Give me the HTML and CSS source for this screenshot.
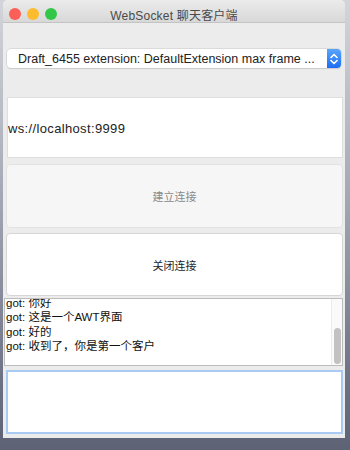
FILE: index.html
```html
<!DOCTYPE html>
<html lang="zh">
<head>
  <meta charset="UTF-8" />
  <meta name="viewport" content="width=device-width, initial-scale=1.0"/>
  <title>WebSocket 聊天客户端</title>
  <link rel="stylesheet" href="styles.css">
</head>
<body>

  <div class="window">
    <!-- barre de titre -->
    <div class="titlebar">
      <div class="lights">
        <span class="light red"></span>
        <span class="light yellow"></span>
        <span class="light green"></span>
      </div>
      <div class="title">WebSocket 聊天客户端</div>
    </div>

    <div class="content">
      <div class="combo">
        <span class="combo-text">Draft_6455 extension: DefaultExtension max frame ...</span>
        <span class="stepper">
          <svg width="8" height="12" viewBox="0 0 8 12">
            <path d="M1 4.5 L4 1.5 L7 4.5 M1 7.5 L4 10.5 L7 7.5" fill="none" stroke="#fff" stroke-width="1.6" stroke-linecap="round" stroke-linejoin="round"/>
          </svg>
        </span>
      </div>

      <div class="url-field">ws://localhost:9999</div>

      <div class="btn btn-disabled">建立连接</div>
      <div class="btn">关闭连接</div>

      <div class="log">
        <div class="log-lines">
          <div>got: 你好</div>
          <div>got: 这是一个AWT界面</div>
          <div>got: 好的</div>
          <div>got: 收到了，你是第一个客户</div>
        </div>
        <div class="scrollbar"><div class="thumb"></div></div>
      </div>

      <div class="input-box"></div>
    </div>
  </div>

</body>
</html>
```

FILE: styles.css
```css
body {
  margin: 0;
  height: 450px;
  overflow: hidden;
  background: linear-gradient(180deg, #d4d5da 0%, #a9acb8 40%, #6c7184 85%, #5d6275 100%);
  font-family: "Liberation Sans", "Noto Sans CJK SC", sans-serif;
}

.window {
  margin-left: 3px;
  width: 342px;
  height: 438px;
  background: #ececec;
  border-radius: 5px 5px 0 0;
  overflow: hidden;
  display: flex;
  flex-direction: column;
}

/* title bar */
.titlebar {
  height: 22px;
  border-bottom: 1px solid #c4c4c4;
  background: linear-gradient(180deg, #ebebeb, #d8d8d8);
  display: flex;
  align-items: center;
  position: relative;
}

.lights {
  display: flex;
  gap: 6px;
  padding-left: 6px;
  padding-top: 5px;
}

.light {
  width: 12px;
  height: 12px;
  border-radius: 50%;
}

.red { background: #fc5f57; }
.yellow { background: #fdbc2e; }
.green { background: #33c748; }

.title {
  position: absolute;
  left: 0;
  right: 0;
  top: 6px;
  text-align: center;
  font-size: 12px;
  letter-spacing: 0.2px;
  color: #4a4a4a;
}

.content {
  display: flex;
  flex-direction: column;
}

/* combo box */
.combo {
  margin: 26px 0 0 4px;
  width: 334px;
  height: 19px;
  box-sizing: border-box;
  background: #fff;
  border-radius: 4px;
  box-shadow: 0 0 0 0.5px #c8c8c8, 0 1px 1px rgba(0, 0, 0, 0.12);
  display: flex;
  align-items: center;
  justify-content: space-between;
}

.combo-text {
  padding-left: 11px;
  font-size: 12.5px;
  color: #222;
  white-space: nowrap;
}

.stepper {
  width: 14px;
  height: 19px;
  border-radius: 0 4px 4px 0;
  background: linear-gradient(180deg, #5aa5fb, #1b6ef3);
  display: flex;
  align-items: center;
  justify-content: center;
}

/* text field */
.url-field {
  margin: 29px 0 0 4px;
  width: 336px;
  height: 61px;
  box-sizing: border-box;
  background: #fff;
  border: 1px solid #dedede;
  font-size: 13px;
  letter-spacing: 0.35px;
  color: #222;
  display: flex;
  align-items: center;
  padding-top: 1px;
}

/* buttons */
.btn {
  margin: 5px 0 0 3px;
  width: 337px;
  height: 63px;
  box-sizing: border-box;
  background: #fff;
  border: 1px solid #d6d6d6;
  border-radius: 4px;
  display: flex;
  align-items: center;
  justify-content: center;
  font-size: 11px;
  color: #1e1e1e;
}

.btn-disabled {
  margin-top: 6px;
  height: 64px;
  background: #f6f6f6;
  border-color: #e2e2e2;
  color: #8a8a8a;
}

/* log area */
.log {
  margin: 2px 0 0 1px;
  width: 339px;
  height: 68px;
  box-sizing: border-box;
  background: #fff;
  border: 1px solid #bcbcbc;
  display: flex;
  overflow: hidden;
}

.log-lines {
  flex: 1;
  margin-top: -3px;
  padding-left: 1px;
  font-size: 11.5px;
  line-height: 14.3px;
  color: #111;
}

.scrollbar {
  width: 10px;
  border-left: 1px solid #ececec;
  background: #fafafa;
  display: flex;
  flex-direction: column;
  justify-content: flex-end;
  align-items: center;
  padding-bottom: 1px;
}

.thumb {
  width: 7px;
  height: 36px;
  border-radius: 4px;
  background: #c2c2c2;
}

/* input */
.input-box {
  margin: 4px 0 0 3px;
  width: 337px;
  height: 64px;
  box-sizing: border-box;
  background: #fff;
  border: 2px solid #a9cbf3;
}
```
